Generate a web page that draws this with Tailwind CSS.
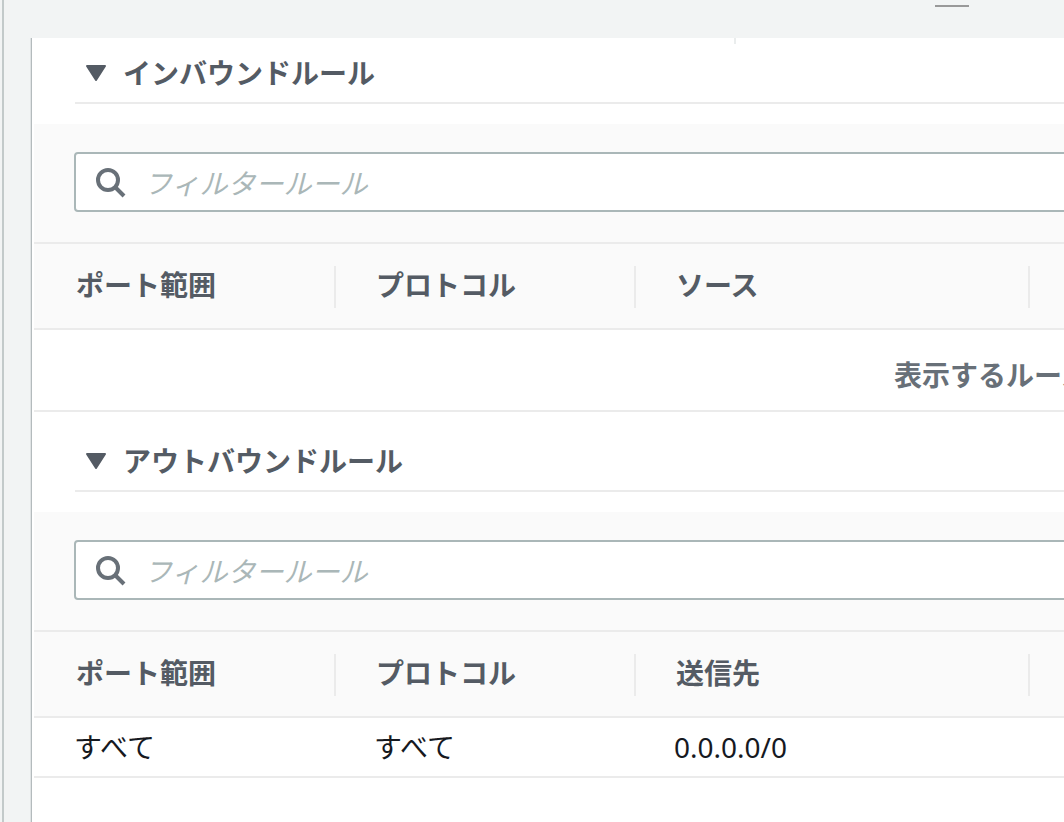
<!DOCTYPE html>
<html lang="ja">
<head>
<title>セキュリティルール</title>
<meta charset="UTF-8">
<meta name="viewport" content="width=device-width, initial-scale=1.0">
<script src="https://cdn.jsdelivr.net/npm/@tailwindcss/browser@4"></script>
</head>
<body class="bg-[#f2f4f4] text-[28px] leading-10 text-[#16191f] font-['Noto_Sans','Noto_Sans_CJK_JP',sans-serif] overflow-hidden">

  <div class="flex flex-col min-h-screen ml-0.5 border-l-2 border-[#c3caca] overflow-hidden">
    <!-- resize handle -->
    <div class="h-[38px] shrink-0 pt-[5px] pl-[931px]">
      <div class="w-[34px] h-0.5 bg-[#999999]"></div>
    </div>

    <main class="relative flex-1 ml-[27px] bg-white border-l border-[#b4bbbd] shadow-[-1px_0_0_#dfe3e4] pl-0.5 overflow-hidden">
      <div class="absolute top-0 left-[702px] w-0.5 h-1.5 bg-[#eaeded]"></div>

      <section>
        <h2 class="h-[66px] ml-[41px] pl-2.5 pt-1.5 flex items-center border-b-2 border-[#ebebeb] font-bold text-[#545b64]">
          <button type="button" class="flex items-center gap-4">
            <svg class="w-[22px] h-[18px]" viewBox="0 0 22 18" fill="#545b64" stroke="#545b64" stroke-width="2" stroke-linejoin="round"><path d="M2 2h18l-9 14z"/></svg>
            インバウンドルール
          </button>
        </h2>
        <div class="mt-5 pt-7 pb-[30px] pl-10 bg-[#fafafa]">
          <label class="flex items-center gap-4 w-[1830px] h-[60px] pl-5 bg-white border-2 border-[#aab7b8] rounded">
            <svg class="w-8 h-8 shrink-0" viewBox="0 0 32 32" fill="none" stroke="#687078" stroke-width="4"><circle cx="12" cy="14" r="10"/><path d="M19 21l9 9"/></svg>
            <input type="text" aria-label="フィルタールール" placeholder="フィルタールール" class="flex-1 h-full pt-0.5 outline-none italic placeholder:text-[#aab7b8]">
          </label>
        </div>
        <table class="table-fixed w-[1916px] border-collapse">
          <colgroup><col class="w-[302px]"><col class="w-[300px]"><col class="w-[394px]"><col></colgroup>
          <thead class="bg-[#fafafa] text-left text-[#545b64]">
            <tr class="h-[86px] border-y-2 border-[#ebebeb]">
              <th class="p-0 pt-0.5"><div class="h-[42px] pl-[42px] pb-1 flex items-center border-r-2 border-[#ebebeb]">ポート範囲</div></th>
              <th class="p-0 pt-0.5"><div class="h-[42px] pl-10 pb-1 flex items-center border-r-2 border-[#ebebeb]">プロトコル</div></th>
              <th class="p-0 pt-0.5"><div class="h-[42px] pl-10 pb-1 flex items-center border-r-2 border-[#ebebeb]">ソース</div></th>
              <th class="p-0"></th>
            </tr>
          </thead>
          <tbody>
            <tr class="h-[82px] border-b-2 border-[#ebebeb]">
              <td colspan="4" class="pt-2.5 text-center font-bold text-[#687078]">表示するルール</td>
            </tr>
          </tbody>
        </table>
      </section>

      <section class="pt-3.5">
        <h2 class="h-[66px] ml-[41px] pl-2.5 pt-1.5 flex items-center border-b-2 border-[#ebebeb] font-bold text-[#545b64]">
          <button type="button" class="flex items-center gap-4">
            <svg class="w-[22px] h-[18px]" viewBox="0 0 22 18" fill="#545b64" stroke="#545b64" stroke-width="2" stroke-linejoin="round"><path d="M2 2h18l-9 14z"/></svg>
            アウトバウンドルール
          </button>
        </h2>
        <div class="mt-5 pt-7 pb-[30px] pl-10 bg-[#fafafa]">
          <label class="flex items-center gap-4 w-[1830px] h-[60px] pl-5 bg-white border-2 border-[#aab7b8] rounded">
            <svg class="w-8 h-8 shrink-0" viewBox="0 0 32 32" fill="none" stroke="#687078" stroke-width="4"><circle cx="12" cy="14" r="10"/><path d="M19 21l9 9"/></svg>
            <input type="text" aria-label="フィルタールール" placeholder="フィルタールール" class="flex-1 h-full pt-0.5 outline-none italic placeholder:text-[#aab7b8]">
          </label>
        </div>
        <table class="table-fixed w-[1916px] border-collapse">
          <colgroup><col class="w-[302px]"><col class="w-[300px]"><col class="w-[394px]"><col></colgroup>
          <thead class="bg-[#fafafa] text-left text-[#545b64]">
            <tr class="h-[86px] border-y-2 border-[#ebebeb]">
              <th class="p-0 pt-0.5"><div class="h-[42px] pl-[42px] pb-1 flex items-center border-r-2 border-[#ebebeb]">ポート範囲</div></th>
              <th class="p-0 pt-0.5"><div class="h-[42px] pl-10 pb-1 flex items-center border-r-2 border-[#ebebeb]">プロトコル</div></th>
              <th class="p-0 pt-0.5"><div class="h-[42px] pl-10 pb-1 flex items-center border-r-2 border-[#ebebeb]">送信先</div></th>
              <th class="p-0"></th>
            </tr>
          </thead>
          <tbody>
            <tr class="h-[60px] border-b-2 border-[#ebebeb]">
              <td class="p-0 pl-10">すべて</td>
              <td class="p-0 pl-[38px]">すべて</td>
              <td class="p-0 pl-[38px]">0.0.0.0/0</td>
              <td class="p-0"></td>
            </tr>
          </tbody>
        </table>
      </section>
    </main>
  </div>

</body>
</html>
